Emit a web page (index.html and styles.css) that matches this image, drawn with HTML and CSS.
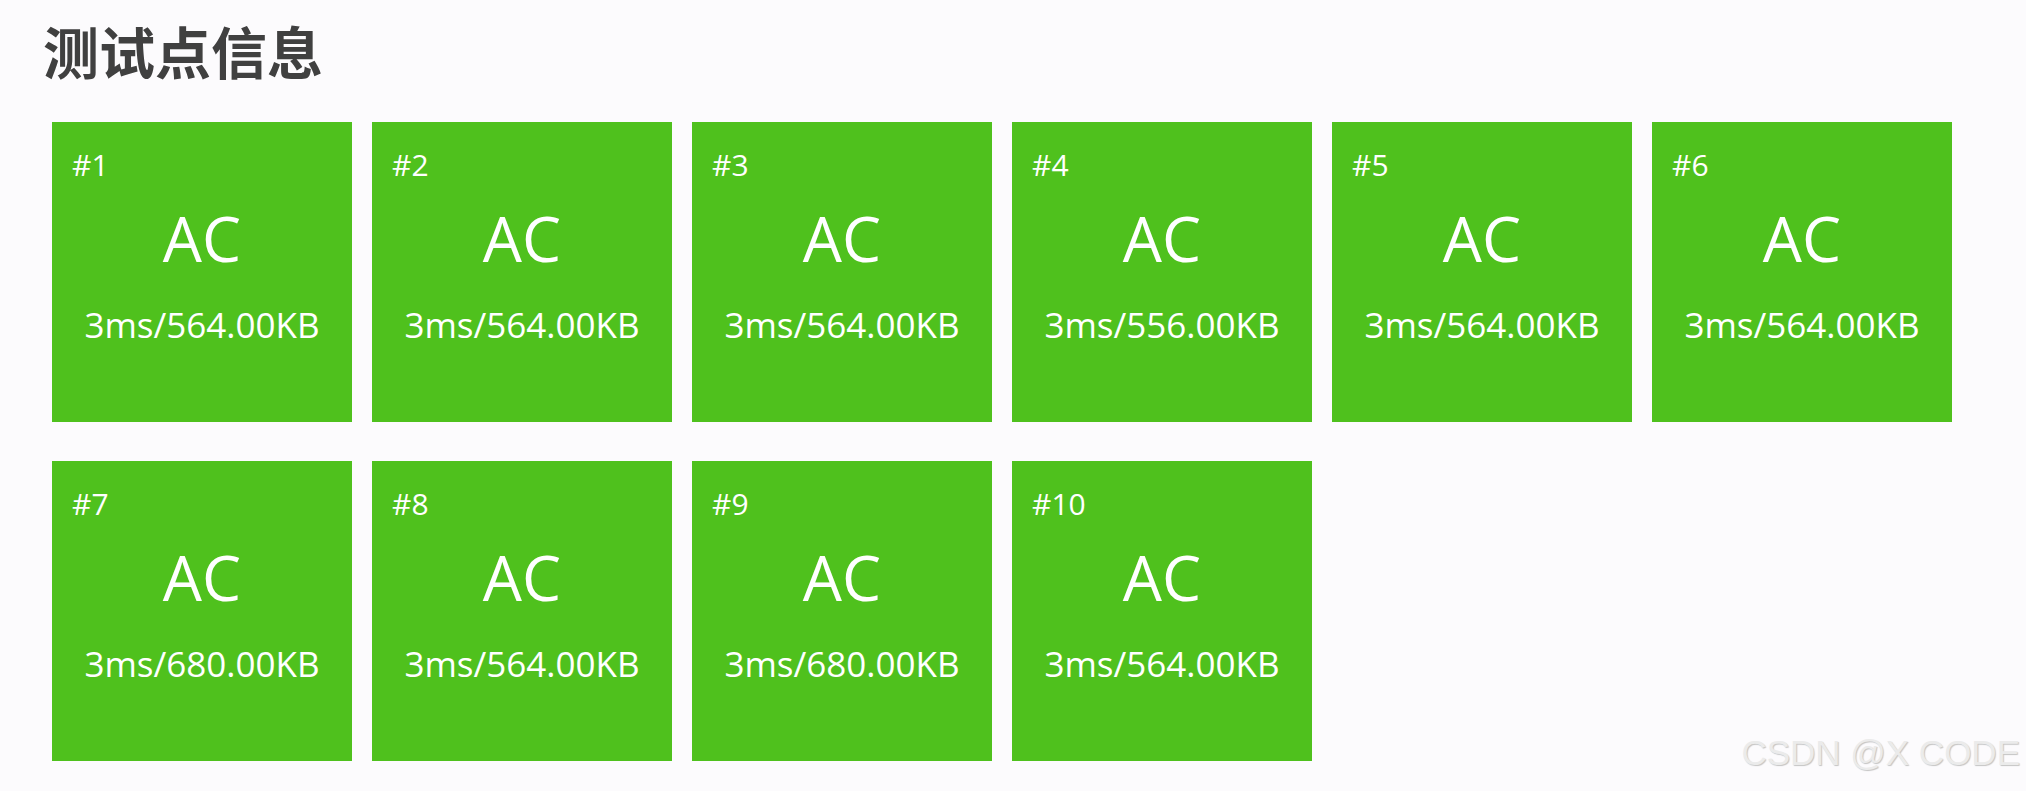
FILE: index.html
```html
<!DOCTYPE html>
<html lang="zh-CN">
  <head>
    <meta charset="UTF-8" />
    <title>测试点信息</title>
    <link rel="stylesheet" href="styles.css">
  </head>
  <body>
    <div class="page">
      <h2 class="title">测试点信息</h2>

      <!-- 测试点列表 -->
      <div class="case-grid">
        <div class="case">
          <div class="case-id">#1</div>
          <div class="case-status">AC</div>
          <div class="case-info">3ms/564.00KB</div>
        </div>
        <div class="case">
          <div class="case-id">#2</div>
          <div class="case-status">AC</div>
          <div class="case-info">3ms/564.00KB</div>
        </div>
        <div class="case">
          <div class="case-id">#3</div>
          <div class="case-status">AC</div>
          <div class="case-info">3ms/564.00KB</div>
        </div>
        <div class="case">
          <div class="case-id">#4</div>
          <div class="case-status">AC</div>
          <div class="case-info">3ms/556.00KB</div>
        </div>
        <div class="case">
          <div class="case-id">#5</div>
          <div class="case-status">AC</div>
          <div class="case-info">3ms/564.00KB</div>
        </div>
        <div class="case">
          <div class="case-id">#6</div>
          <div class="case-status">AC</div>
          <div class="case-info">3ms/564.00KB</div>
        </div>
        <div class="case">
          <div class="case-id">#7</div>
          <div class="case-status">AC</div>
          <div class="case-info">3ms/680.00KB</div>
        </div>
        <div class="case">
          <div class="case-id">#8</div>
          <div class="case-status">AC</div>
          <div class="case-info">3ms/564.00KB</div>
        </div>
        <div class="case">
          <div class="case-id">#9</div>
          <div class="case-status">AC</div>
          <div class="case-info">3ms/680.00KB</div>
        </div>
        <div class="case">
          <div class="case-id">#10</div>
          <div class="case-status">AC</div>
          <div class="case-info">3ms/564.00KB</div>
        </div>
      </div>
    </div>

    <div class="watermark">CSDN @X CODE</div>
  </body>
</html>
```

FILE: styles.css
```css
body {
  margin: 0;
  padding: 0;
  background-color: #fcfbfd;
  font-family: "Open Sans", "Noto Sans", sans-serif;
  position: relative;
  height: 100vh;
  overflow: hidden;
}
.page {
  padding: 0;
}
.title {
  margin: 0;
  padding-left: 43px;
  font-family: "Noto Sans CJK SC", "Noto Sans", sans-serif;
  font-size: 56px;
  line-height: 100px;
  font-weight: bold;
  color: #404040;
}
/* 测试点方块 */
.case-grid {
  display: grid;
  grid-template-columns: repeat(6, 300px);
  column-gap: 20px;
  row-gap: 39px;
  margin-top: 22px;
  padding-left: 52px;
}
.case {
  height: 300px;
  box-sizing: border-box;
  padding: 24px 20px;
  background-color: #4fc11d;
  color: #fff;
}
.case-id {
  font-size: 30px;
  line-height: 38px;
}
.case-status {
  margin-top: 14px;
  font-size: 62px;
  line-height: 80px;
  text-align: center;
}
.case-info {
  margin-top: 23px;
  font-size: 35px;
  line-height: 48px;
  text-align: center;
}
/* 水印 */
.watermark {
  position: absolute;
  right: 6px;
  bottom: 18px;
  font-family: "Liberation Sans", Arial, sans-serif;
  font-size: 35px;
  color: #ebebeb;
  text-shadow: 1px 1px 1px #c4c4c4;
}
```
